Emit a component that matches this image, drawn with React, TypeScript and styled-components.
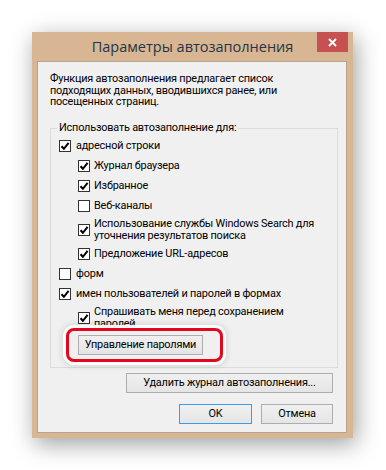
import React from 'react';
import styled, { createGlobalStyle } from 'styled-components';

const Global = createGlobalStyle`
  html, body {
    margin: 0;
    padding: 0;
    background: #ffffff;
  }
`;

const Page = styled.div`
  padding: 32px;
  font-family: Roboto, "Open Sans", "DejaVu Sans", sans-serif;
`;

const Window = styled.div`
  width: 321px;
  background: #d9b693;
  box-shadow: 3px 6px 22px rgba(0, 0, 0, 0.38);
  display: flex;
  flex-direction: column;
`;

const TitleBar = styled.div`
  height: 29px;
  display: grid;
  grid-template-columns: 1fr auto 1fr;
`;

const Title = styled.div`
  grid-column: 2;
  font-family: "Open Sans", "Noto Sans", sans-serif;
  font-size: 14.5px;
  line-height: 29px;
  color: #243446;
  white-space: nowrap;
`;

const CloseBtn = styled.div`
  grid-column: 3;
  justify-self: end;
  margin-right: 5px;
  width: 31px;
  height: 20px;
  background: #c75050;
  display: flex;
  align-items: center;
  justify-content: center;
`;

const Body = styled.div`
  margin: 0 6px 5px 5px;
  background: #f0f0f0;
  border: 1px solid #b9a48d;
  padding: 11px 8px 8px 12px;
  font-size: 10.9px;
  letter-spacing: -0.2px;
  line-height: 11.7px;
  color: #000;
`;

const Intro = styled.p`
  margin: 0 0 14px 0;
  white-space: nowrap;
`;

const Group = styled.fieldset`
  margin: 0;
  border: 1px solid #dcdcdc;
  padding: 2px 0 5px 8px;
  min-width: 0;
`;

const Legend = styled.legend`
  padding: 0 2px;
  margin-left: -2px;
  line-height: 12px;
`;

const Row = styled.label<{ $level: number; $lines?: number }>`
  display: flex;
  align-items: center;
  gap: ${p => (p.$level ? 4 : 5)}px;
  min-height: 20px;
  padding: ${p => (p.$lines && p.$lines > 1 ? '2px 0' : '0')};
  padding-left: ${p => p.$level * 19}px;
  line-height: 12px;
  white-space: nowrap;
`;

const Box = styled.span`
  box-sizing: border-box;
  width: 12px;
  height: 12px;
  flex-shrink: 0;
  border: 1px solid #333;
  background: #fff;
  display: flex;
  align-items: center;
  justify-content: center;
`;

const Highlight = styled.div`
  position: relative;
  display: inline-flex;
  margin: -4px 0 0 7px;
  padding: 4px 17px 4px 9px;
  border: 3px solid #e2071d;
  border-radius: 8px;
  background: #f0f0f0;
  box-shadow: 0 0 0 3px rgba(255, 255, 255, 0.92), 0 0 6px 4px rgba(0, 0, 0, 0.12);
`;

const Button = styled.div<{ $width: number; $primary?: boolean }>`
  box-sizing: border-box;
  width: ${p => p.$width}px;
  height: 20px;
  border: 1px solid ${p => (p.$primary ? '#3c9af0' : '#adadad')};
  background: linear-gradient(#f0f0f0, #e5e5e5);
  display: flex;
  align-items: center;
  justify-content: center;
  white-space: nowrap;
  line-height: 12px;
`;

const ButtonRow = styled.div<{ $top: number }>`
  display: flex;
  justify-content: flex-end;
  gap: 9px;
  margin-top: ${p => p.$top}px;
  padding-right: 5px;
`;

const Check: React.FC<{ checked: boolean }> = ({ checked }) => (
  <Box>
    {checked && (
      <svg width="10" height="10" viewBox="0 0 10 10">
        <path d="M1.5 5.2 L3.9 7.8 L8.6 1.8" fill="none" stroke="#000" strokeWidth="2" />
      </svg>
    )}
  </Box>
);

type Item = { label: React.ReactNode; level: number; checked: boolean; lines?: number };

const items: Item[] = [
  { label: 'адресной строки', level: 0, checked: true },
  { label: 'Журнал браузера', level: 1, checked: true },
  { label: 'Избранное', level: 1, checked: true },
  { label: 'Веб-каналы', level: 1, checked: false },
  {
    label: <>Использование службы Windows Search для<br />уточнения результатов поиска</>,
    level: 1,
    checked: true,
    lines: 2,
  },
  { label: 'Предложение URL-адресов', level: 1, checked: true },
  { label: 'форм', level: 0, checked: false },
  { label: 'имен пользователей и паролей в формах', level: 0, checked: true },
  {
    label: <>Спрашивать меня перед сохранением<br />паролей</>,
    level: 1,
    checked: true,
    lines: 2,
  },
];

const App: React.FC = () => (
  <Page>
    <Global />
    <Window>
      <TitleBar>
        <Title>Параметры автозаполнения</Title>
        <CloseBtn>
          <svg width="9" height="9" viewBox="0 0 9 9">
            <path d="M1 1 L8 8 M8 1 L1 8" stroke="#fff" strokeWidth="2" />
          </svg>
        </CloseBtn>
      </TitleBar>
      <Body>
        <Intro>
          Функция автозаполнения предлагает список
          <br />
          подходящих данных, вводившихся ранее, или
          <br />
          посещенных страниц.
        </Intro>
        <Group>
          <Legend>Использовать автозаполнение для:</Legend>
          {items.map((it, i) => (
            <Row key={i} $level={it.level} $lines={it.lines}>
              <Check checked={it.checked} />
              <span>{it.label}</span>
            </Row>
          ))}
          <Highlight>
            <Button $width={125}>Управление паролями</Button>
          </Highlight>
        </Group>
        <ButtonRow $top={5}>
          <Button $width={207}>Удалить журнал автозаполнения...</Button>
        </ButtonRow>
        <ButtonRow $top={11}>
          <Button $width={73} $primary>OK</Button>
          <Button $width={72}>Отмена</Button>
        </ButtonRow>
      </Body>
    </Window>
  </Page>
);

export default App;
